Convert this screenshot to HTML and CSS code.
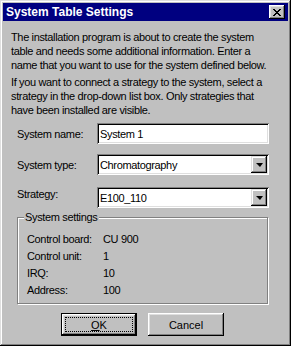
FILE: index.html
```html
<!DOCTYPE html>
<html lang="en">
<head>
  <meta charset="UTF-8" />
  <title>System Table Settings</title>
  <link rel="stylesheet" href="styles.css">
</head>
<body>
  <div class="dialog">
    <div class="titlebar">
      <span class="title">System Table Settings</span>
      <span class="close">
        <svg width="8" height="7" viewBox="0 0 8 7" shape-rendering="crispEdges">
          <path d="M0 0h2v1h-2z M6 0h2v1h-2z M1 1h2v1h-2z M5 1h2v1h-2z M2 2h4v1h-4z M3 3h2v1h-2z M2 4h4v1h-4z M1 5h2v1h-2z M5 5h2v1h-2z M0 6h2v1h-2z M6 6h2v1h-2z" fill="#000"/>
        </svg>
      </span>
    </div>

    <div class="content">
      <p class="intro">The installation program is about to create the system table and needs some additional information. Enter a name that you want to use for the system defined below.</p>
      <p class="intro">If you want to connect a strategy to the system, select a strategy in the drop-down list box. Only strategies that have been installed are visible.</p>

      <div class="row row-name">
        <label class="label">System name:</label>
        <div class="field">System 1</div>
      </div>
      <div class="row row-type">
        <label class="label">System type:</label>
        <div class="field combo">
          <span>Chromatography</span>
          <span class="arrow"><span class="tri"></span></span>
        </div>
      </div>
      <div class="row row-strategy">
        <label class="label label-high">Strategy:</label>
        <div class="field combo">
          <span>E100_110</span>
          <span class="arrow"><span class="tri"></span></span>
        </div>
      </div>

      <div class="group">
        <span class="legend">System settings</span>
        <div class="info"><span class="key">Control board:</span><span>CU 900</span></div>
        <div class="info"><span class="key">Control unit:</span><span>1</span></div>
        <div class="info"><span class="key">IRQ:</span><span>10</span></div>
        <div class="info"><span class="key">Address:</span><span>100</span></div>
      </div>

      <div class="buttons">
        <button class="btn btn-default"><span class="focus"><u>O</u>K</span></button>
        <button class="btn">Cancel</button>
      </div>
    </div>
  </div>
</body>
</html>
```

FILE: styles.css
```css
body {
  margin: 0;
  font-family: "Liberation Sans", Arial, sans-serif;
  font-size: 11px;
  letter-spacing: -0.35px;
  color: #000;
  background: #c0c0c0;
}
.dialog {
  width: 291px;
  height: 346px;
  box-sizing: border-box;
  padding: 3px;
  background: #c0c0c0;
  box-shadow: inset -1px -1px #000, inset 1px 1px #dfdfdf, inset -2px -2px #808080, inset 2px 2px #fff;
}
.titlebar {
  height: 18px;
  background: #000080;
  color: #fff;
  display: flex;
  align-items: center;
  justify-content: space-between;
  padding: 0 3px 0 3px;
}
.title {
  font-weight: bold;
  font-size: 12px;
  letter-spacing: 0;
}
.close {
  width: 16px;
  height: 14px;
  box-sizing: border-box;
  background: #c0c0c0;
  box-shadow: inset -1px -1px #000, inset 1px 1px #fff, inset -2px -2px #808080, inset 2px 2px #dfdfdf;
  display: flex;
  align-items: center;
  justify-content: center;
  padding-right: 1px;
}
.content {
  padding: 9px 0 0 8px;
}
.intro {
  margin: 0 0 3px 0;
  line-height: 14px;
  width: 265px;
}
.row {
  display: flex;
  align-items: center;
  margin-left: 6px;
}
.row-name { margin-top: 6px; }
.row-type { margin-top: 10px; }
.row-strategy { margin-top: 12px; }
.label {
  width: 80px;
}
.label-high {
  align-self: flex-start;
  margin-top: 1px;
}
.field {
  width: 172px;
  height: 21px;
  box-sizing: border-box;
  background: #fff;
  padding: 0 3px;
  display: flex;
  align-items: center;
  justify-content: space-between;
  box-shadow: inset 1px 1px #808080, inset -1px -1px #fff, inset 2px 2px #000, inset -2px -2px #dfdfdf;
}
.combo {
  padding-right: 2px;
}
.arrow {
  width: 16px;
  height: 17px;
  box-sizing: border-box;
  background: #c0c0c0;
  box-shadow: inset -1px -1px #000, inset 1px 1px #dfdfdf, inset -2px -2px #808080, inset 2px 2px #fff;
  display: flex;
  align-items: center;
  justify-content: center;
}
.tri {
  width: 0;
  height: 0;
  border-left: 4px solid transparent;
  border-right: 3px solid transparent;
  border-top: 4px solid #000;
  margin-top: 1px;
}
.group {
  position: relative;
  margin: 9px 0 0 6px;
  width: 251px;
  height: 87px;
  box-sizing: border-box;
  border: 1px solid #808080;
  box-shadow: inset 1px 1px #fff, 1px 1px #fff;
  padding: 12px 0 0 9px;
}
.legend {
  position: absolute;
  top: -7px;
  left: 6px;
  padding: 0 2px 0 1px;
  background: #c0c0c0;
}
.info {
  display: flex;
  height: 17px;
  align-items: center;
}
.key {
  width: 76px;
}
.buttons {
  display: flex;
  gap: 11px;
  margin: 9px 0 0 50px;
}
.btn {
  width: 76px;
  height: 23px;
  padding: 0;
  border: none;
  background: #c0c0c0;
  font-family: "Liberation Sans", Arial, sans-serif;
  font-size: 11px;
  color: #000;
  box-shadow: inset -1px -1px #000, inset 1px 1px #fff, inset -2px -2px #808080, inset 2px 2px #dfdfdf;
}
.btn-default {
  border: 1px solid #000;
  padding: 3px;
}
.focus {
  display: flex;
  height: 100%;
  box-sizing: border-box;
  align-items: center;
  justify-content: center;
  border: 1px dotted #000;
}
```
